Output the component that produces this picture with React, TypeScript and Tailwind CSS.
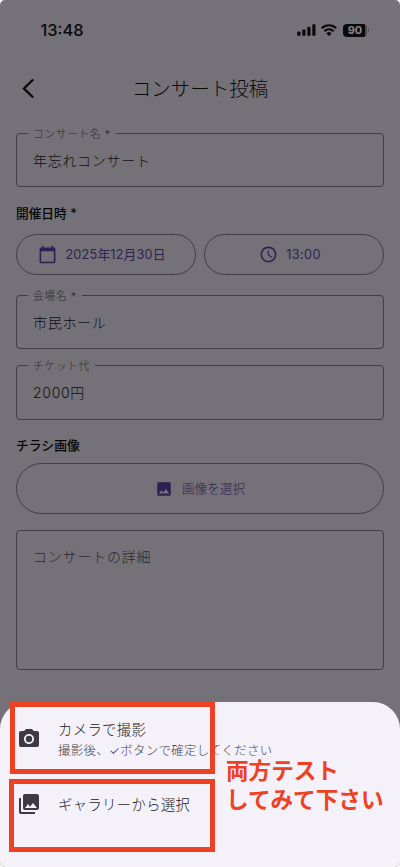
import type { ReactNode } from "react";
import {
  MdAccessTime,
  MdCalendarToday,
  MdImage,
  MdPhotoCamera,
  MdPhotoLibrary,
} from "react-icons/md";

function StatusBar() {
  return (
    <div className="flex h-[60px] items-center justify-between pr-[31px] pl-[40.5px] text-[#0a0a0b]">
      <span className="text-[16.4px] leading-5 font-medium">13:48</span>
      <div className="flex items-center">
        <svg width="19" height="12" viewBox="0 0 19 12" fill="currentColor">
          <rect x="0.3" y="7.6" width="3.2" height="4.2" rx="0.9" />
          <rect x="5.3" y="5.4" width="3.2" height="6.4" rx="0.9" />
          <rect x="10.3" y="2.8" width="3.2" height="9" rx="0.9" />
          <rect x="15.3" y="0.2" width="3.2" height="11.6" rx="0.9" />
        </svg>
        <svg
          className="ml-[5px]"
          width="16"
          height="12"
          viewBox="0 0 16 12"
          fill="none"
          stroke="currentColor"
          strokeWidth="2.1"
        >
          <path d="M0.8 4.3a10.2 10.2 0 0 1 14.4 0" />
          <path d="M3.4 7.2a6.4 6.4 0 0 1 9.2 0" />
          <path d="M8 12 5.4 9.4a3.6 3.6 0 0 1 5.2 0Z" fill="currentColor" stroke="none" />
        </svg>
        <div className="ml-[6px] flex h-[13px] w-6 items-center justify-center rounded-[4px] bg-linear-to-r from-[#0a0a0b] from-90% to-[#4e4c51] to-90% text-[11px] leading-none font-bold text-[#8a888e]">
          90
        </div>
        <div className="ml-px h-1 w-px rounded-r bg-[#4e4c51]" />
      </div>
    </div>
  );
}

function Field({ label, value, className }: { label: string; value: string; className: string }) {
  return (
    <fieldset className={`rounded-[4px] border border-[#403e44] pl-[11px] ${className}`}>
      <legend className="h-[13px] px-[5px] text-[10.8px] leading-[15px] font-light tracking-[0.55px] text-[#2c2a30]">
        {label}
      </legend>
      <div className="mt-[11px] pl-[5px] text-[14px] leading-5 font-light tracking-[0.7px] text-[#0e0d10]">
        {value}
      </div>
    </fieldset>
  );
}

function OutlineButton({ className, children }: { className: string; children: ReactNode }) {
  return (
    <button
      className={`flex items-center justify-center rounded-full border border-[#403e44] text-[#2c2152] ${className}`}
    >
      {children}
    </button>
  );
}

export default function App() {
  return (
    <div className="bg-white font-['Inter','Noto_Sans_CJK_JP',sans-serif]">
      <div className="relative flex h-[867px] w-[400px] flex-col overflow-hidden rounded-[5px] bg-[#747278]">
        <StatusBar />
        <header className="relative flex h-[57px] items-center justify-center">
          <svg
            className="absolute top-[18px] left-[22px]"
            width="13"
            height="21"
            viewBox="0 0 13 21"
            fill="none"
            stroke="#0a0a0b"
            strokeWidth="2.4"
          >
            <path d="M11.2 1.5 2 10.5l9.2 9" />
          </svg>
          <h1 className="pt-px text-[19.5px] leading-7 font-light text-[#0a0a0b]">
            コンサート投稿
          </h1>
        </header>

        <main className="flex flex-col px-4 pt-[10px]">
          <Field label="コンサート名 *" value="年忘れコンサート" className="h-[60px]" />
          <h2 className="mt-[17px] text-[12.7px] leading-5 font-medium text-[#050506]">
            開催日時 *
          </h2>
          <div className="mt-[10px] flex gap-2">
            <OutlineButton className="h-[41px] flex-1 pr-[8px]">
              <MdCalendarToday size={19} />
              <span className="ml-[8px] pt-px text-[12.7px] font-normal tracking-[0.2px]">
                2025年12月30日
              </span>
            </OutlineButton>
            <OutlineButton className="h-[41px] flex-1 pr-[8px]">
              <MdAccessTime size={19} />
              <span className="ml-[8px] text-[12.7px] font-normal tracking-[0.4px]">13:00</span>
            </OutlineButton>
          </div>
          <Field label="会場名 *" value="市民ホール" className="mt-[14px] h-[60px]" />
          <Field label="チケット代" value="2000円" className="mt-[10px] h-[61px]" />
          <h2 className="mt-[16px] text-[12.8px] leading-5 font-medium text-[#050506]">
            チラシ画像
          </h2>
          <OutlineButton className="mt-[7px] h-[51px]">
            <MdImage size={18} />
            <span className="ml-[9px] pt-px text-[12.6px] font-light">画像を選択</span>
          </OutlineButton>
          <div className="mt-4 h-[140px] rounded-[4px] border border-[#403e44] px-4 pt-[16px] text-[14px] leading-5 font-light tracking-[0.8px] text-[#29272d]">
            コンサートの詳細
          </div>
        </main>

        <section className="absolute inset-x-0 bottom-0 h-[165px] rounded-t-[27px] bg-[#f5f1f9] pt-[17px] pl-[17px] text-[#1c1a20]">
          <div className="flex h-10 items-center">
            <MdPhotoCamera size={24} className="text-[#3d3a44]" />
            <div className="ml-[17px] pt-[3px]">
              <p className="text-[14.3px] leading-5 font-light tracking-[0.4px]">カメラで撮影</p>
              <p className="mt-px text-[12.4px] leading-5 font-light tracking-[0.35px] text-[#45424b]">
                撮影後、✓ボタンで確定してください
              </p>
            </div>
          </div>
          <div className="mt-[33px] flex h-6 items-center">
            <MdPhotoLibrary size={24} className="text-[#3d3a44]" />
            <p className="ml-[17px] pt-px text-[14.3px] leading-5 font-light tracking-[0.4px]">
              ギャラリーから選択
            </p>
          </div>
        </section>

        {/* red marks over the sheet */}
        <div className="absolute top-[702px] left-[10px] h-[72px] w-[205px] border-5 border-[#ee4023]" />
        <div className="absolute top-[779px] left-[9px] h-[73px] w-[206px] border-5 border-[#ee4023]" />
        <p className="absolute top-[757px] left-[226px] text-[22.6px] leading-[28.5px] font-bold whitespace-nowrap text-[#ee4023]">
          両方テスト
          <br />
          してみて下さい
        </p>
      </div>
    </div>
  );
}
